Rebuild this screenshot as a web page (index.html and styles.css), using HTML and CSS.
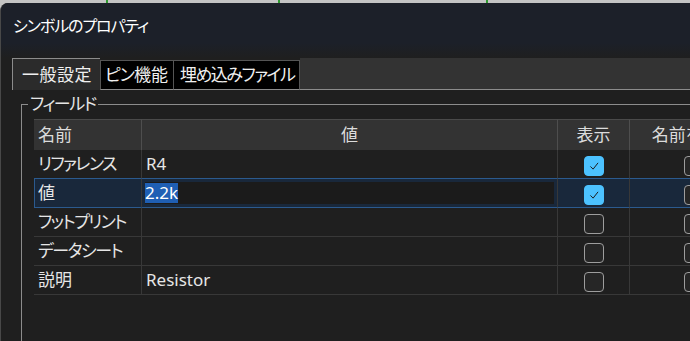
FILE: index.html
```html
<!DOCTYPE html>
<html lang="ja">
<head>
  <meta charset="UTF-8">
  <title>シンボルのプロパティ</title>
  <link rel="stylesheet" href="styles.css">
</head>
<body>

  <!-- canvas behind the dialog -->
  <div class="desktop"></div>

  <div class="dialog">
    <div class="titlebar">シンボルのプロパティ</div>

    <div class="tabs">
      <div class="tab active">一般設定</div>
      <div class="tab first"><span class="kana-s">ピン</span>機能</div>
      <div class="tab"><span class="kana">埋め込みファイル</span></div>
      <div class="tab-fill"></div>
    </div>

    <div class="panel">
      <fieldset class="fields">
        <legend><span class="kana">フィールド</span></legend>
        <table class="grid">
          <colgroup>
            <col class="c-name">
            <col class="c-value">
            <col class="c-show">
            <col class="c-showname">
          </colgroup>
          <tr>
            <th class="left">名前</th>
            <th>値</th>
            <th>表示</th>
            <th>名前を表示</th>
          </tr>
          <tr class="pre">
            <td><span class="kana">リファレンス</span></td>
            <td>R4</td>
            <td class="chk"><span class="cb on"><svg viewBox="0 0 20 20"><path d="M6 10.5 L9 13.5 L14.5 6.5"/></svg></span></td>
            <td class="chk"><span class="cb"></span></td>
          </tr>
          <tr class="sel">
            <td>値</td>
            <td class="edit-cell"><div class="editor"><span class="hl">2.2k</span></div></td>
            <td class="chk"><span class="cb on"><svg viewBox="0 0 20 20"><path d="M6 10.5 L9 13.5 L14.5 6.5"/></svg></span></td>
            <td class="chk"><span class="cb"></span></td>
          </tr>
          <tr>
            <td><span class="kana">フットプリント</span></td>
            <td></td>
            <td class="chk"><span class="cb"></span></td>
            <td class="chk"><span class="cb"></span></td>
          </tr>
          <tr>
            <td><span class="kana">データシート</span></td>
            <td></td>
            <td class="chk"><span class="cb"></span></td>
            <td class="chk"><span class="cb"></span></td>
          </tr>
          <tr>
            <td>説明</td>
            <td>Resistor</td>
            <td class="chk"><span class="cb"></span></td>
            <td class="chk"><span class="cb"></span></td>
          </tr>
        </table>
      </fieldset>
    </div>
  </div>

</body>
</html>
```

FILE: styles.css
```css
body {
  margin: 0;
  width: 690px;
  height: 341px;
  overflow: hidden;
  background: #c4c4c4;
  font-family: "Noto Sans", "Noto Sans CJK JP", sans-serif;
  font-feature-settings: "palt";
  color: #e6e6e6;
}

/* katakana in the UI font is narrower than in Noto */
.kana {
  letter-spacing: -1.5px;
}

.kana-s {
  letter-spacing: -1px;
}

.desktop {
  height: 3px;
  background:
    linear-gradient(#2f9a2f, #2f9a2f) 106px 0 / 2px 100% no-repeat,
    linear-gradient(#2f9a2f, #2f9a2f) 278px 0 / 2px 100% no-repeat,
    linear-gradient(#2f9a2f, #2f9a2f) 486px 0 / 2px 100% no-repeat,
    #c4c4c4;
}

.dialog {
  height: 338px;
  background: #1f1f1f;
  border-top-left-radius: 8px;
  border-left: 1px solid #484848;
  overflow: hidden;
}

.titlebar {
  box-sizing: border-box;
  height: 55px;
  padding: 13px 12px 0;
  font-size: 16px;
  line-height: 20px;
  letter-spacing: -1.1px;
  color: #fff;
  background: linear-gradient(#1c2029 0, #1c2029 40px, #1f1f1f 55px);
}

/* notebook tabs */
.tabs {
  display: flex;
  align-items: flex-end;
  height: 32px;
  padding-left: 11px;
  font-size: 17px;
  line-height: 20px;
}

.tab {
  box-sizing: border-box;
  height: 30px;
  display: flex;
  align-items: center;
  padding: 0 5px 0 6px;
  background: #000;
  color: #f0f0f0;
  border-top: 1px solid #555;
  border-right: 1px solid #555;
  border-bottom: 1px solid #8c8c8c;
}

.tab.first {
  border-left: 1px solid #555;
  padding-left: 4px;
}

.tab.active {
  height: 32px;
  padding: 0 8px 0 9px;
  letter-spacing: 0.5px;
  background: #2b2b2b;
  border: 1px solid #8c8c8c;
  border-right: none;
  border-bottom: none;
}

.tab-fill {
  flex: 1;
  box-sizing: border-box;
  height: 32px;
  background: #333;
  border-bottom: 1px solid #8c8c8c;
}

.panel {
  padding-left: 20px;
}

.fields {
  margin: 4px 0 0;
  padding: 5px 0 0;
  min-width: 0;
  border: 1px solid #8c8c8c;
  border-right: none;
  border-bottom: none;
  height: 260px;
}

.fields legend {
  margin-left: 6px;
  padding: 0 2px;
  font-size: 17px;
  line-height: 20px;
  color: #e6e6e6;
}

/* field grid */
.grid {
  margin-left: 12px;
  border-collapse: separate;
  border-spacing: 0;
  table-layout: fixed;
  width: 723px;
  font-size: 17px;
  line-height: 20px;
}

.c-name { width: 107px; }
.c-value { width: 416px; }
.c-show { width: 72px; }
.c-showname { width: 128px; }

.grid th {
  box-sizing: border-box;
  height: 31px;
  padding: 0;
  font-weight: normal;
  color: #dcdcdc;
  background: #333;
  border-top: 1px solid #4a4a4a;
  border-left: 1px solid #4e4e4e;
  text-align: center;
}

.grid th.left {
  text-align: left;
  padding-left: 4px;
  border-left: none;
}

.grid td {
  box-sizing: border-box;
  height: 29px;
  padding: 0 0 0 4px;
  border-bottom: 1px solid #383838;
  border-left: 1px solid #383838;
  white-space: nowrap;
  overflow: hidden;
}

.grid td:first-child {
  border-left: none;
}

.grid tr.pre td {
  border-bottom-color: #2b5a8e;
}

.grid tr.sel td {
  background: #19283b;
  border-bottom-color: #2b5a8e;
}

.grid tr.sel td:first-child {
  border-left: 1px solid #2b5a8e;
  padding-left: 3px;
}

.grid td.edit-cell {
  padding: 0 3px 0 3px;
}

.editor {
  height: 22px;
  background: #1b1b1b;
  display: flex;
  align-items: center;
}

.hl {
  background: #1f5fb4;
  color: #fff;
  line-height: 20px;
}

.grid td.chk {
  padding: 0;
  text-align: center;
}

.cb {
  box-sizing: border-box;
  display: inline-block;
  width: 20px;
  height: 20px;
  margin-top: 3px;
  vertical-align: top;
  border: 1px solid #9d9d9d;
  border-radius: 4px;
  background: #262626;
}

.cb.on {
  background: #4cc2ff;
  border-color: #4cc2ff;
}

.cb svg {
  display: block;
  width: 18px;
  height: 18px;
}

.cb svg path {
  fill: none;
  stroke: #1c1c1c;
  stroke-width: 1.1;
}
```
